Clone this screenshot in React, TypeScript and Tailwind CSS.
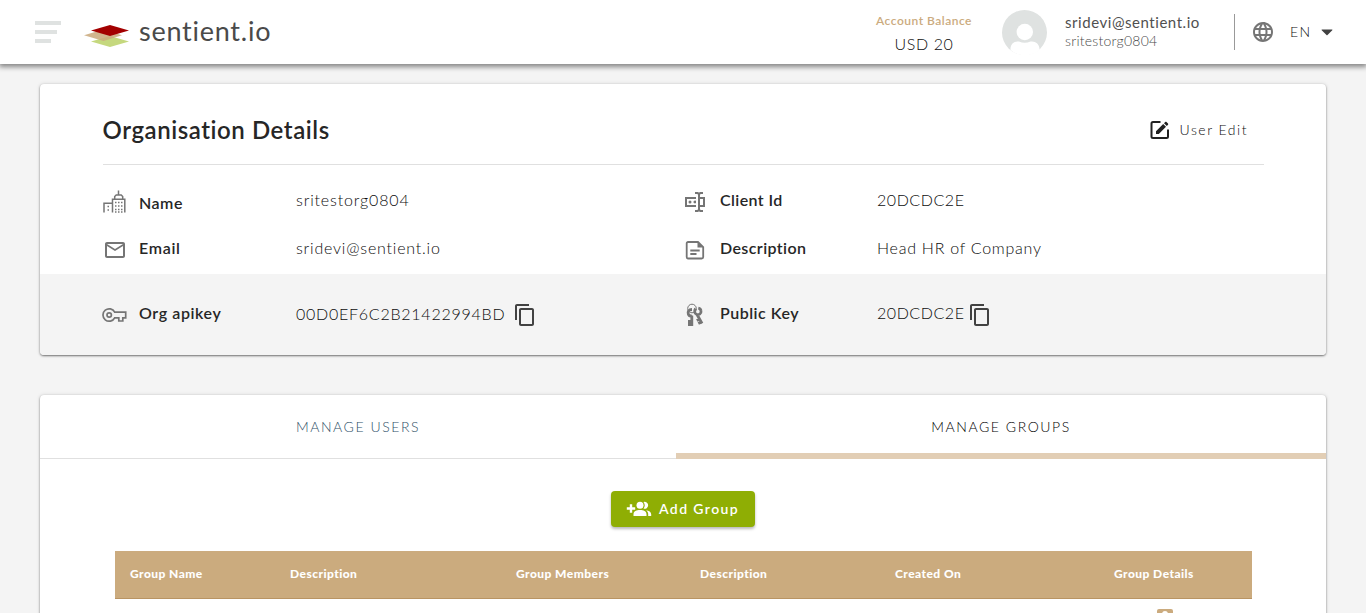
import type { ReactNode } from "react";
import { MdLanguage, MdOutlineMailOutline, MdContentCopy } from "react-icons/md";

function Logo() {
  return (
    <svg className="h-[24px] w-[46px]" viewBox="0 0 46 24">
      <path d="M7 17.5 26 12l19 5.500L26 23Z" fill="#c5d87e" />
      <path d="M0 11.300 19.500 5.500 38 11.300 19.500 17Z" fill="#cbab7e" fillOpacity="0.88" />
      <path d="M7 6.500 26 1l19 5.500L26 12Z" fill="#a30000" />
    </svg>
  );
}

function Avatar() {
  return (
    <svg className="size-[46px]" viewBox="0 0 46 46">
      <circle cx="22.500" cy="23.500" r="22.500" fill="#dfe2e1" />
      <circle cx="22.800" cy="23" r="8.200" fill="#fff" />
      <path d="M8.500 41v-1C8.500 35.500 11.500 32.500 15.500 32.500h1.500c4 1.800 7.500 1.800 11.500 0H30c4 0 7.500 3 7.500 7.500v1c-8 7-21 7-29 0Z" fill="#fff" />
    </svg>
  );
}

function CityIcon() {
  return (
    <svg className="h-[24px] w-[23px]" viewBox="0 0 23 24" fill="none" stroke="#757575" strokeWidth="1.500">
      <path d="M1 22.500V13.200h8M9.500 22.500V9.200h12.300V22.500M11.700 9V6.500l1.500-1.500h5l1.500 1.500V9M15.500 5V.5" />
      <path d="M4.500 16.500h1.500M4.500 20h1.500M12 12.500h1.500m1.500 0h1.500m1.500 0h1.500M12 16h1.500m1.500 0h1.500m1.500 0h1.500M12 19.500h1.500m1.500 0h1.500m1.500 0h1.500M12 22h1.500m1.500 0h1.500m1.500 0h1.500" />
    </svg>
  );
}

function TextboxIcon() {
  return (
    <svg className="-ml-px size-[24px]" viewBox="0 0 24 24" fill="#757575">
      <path d="M17,7H22V17H17V19A1,1 0 0,0 18,20H20V22H17.5C16.95,22 16,21.55 16,21C16,21.55 15.05,22 14.5,22H12V20H14A1,1 0 0,0 15,19V5A1,1 0 0,0 14,4H12V2H14.5C15.05,2 16,2.45 16,3C16,2.45 16.95,2 17.5,2H20V4H18A1,1 0 0,0 17,5V7M2,7H13V9H4V15H13V17H2V7M20,15V9H17V15H20M8.5,12A1.5,1.5 0 0,0 7,10.5A1.5,1.5 0 0,0 5.5,12A1.5,1.5 0 0,0 7,13.5A1.5,1.5 0 0,0 8.5,12M13,10.89C12.39,10.33 11.44,10.38 10.88,11C10.32,11.6 10.37,12.55 11,13.11C11.55,13.63 12.43,13.63 13,13.11V10.89Z" />
    </svg>
  );
}

function NoteIcon() {
  return (
    <svg className="-ml-px size-[24px]" viewBox="0 0 24 24" fill="none" stroke="#757575" strokeWidth="1.800">
      <path d="M5 4h10l5.200 5.200V19a1.500 1.500 0 0 1-1.500 1.500H5A1.500 1.500 0 0 1 3.700 19V5.300A1.300 1.300 0 0 1 5 4Z" />
      <path d="M14.500 4v5.500h5.500Z" fill="#757575" stroke="none" />
      <path d="M7.300 12.500h9.400M7.300 16h6.200" />
    </svg>
  );
}

function KeyIcon() {
  return (
    <svg className="-ml-px h-[16px] w-[25px]" viewBox="0 0 25 16" fill="none" stroke="#757575" strokeWidth="1.700">
      <path d="M12.700 5.200A6.200 6.200 0 1 0 12.700 10.800H16.800V14H20.800V10.800H23.700V5.200Z" />
      <circle cx="7.200" cy="8" r="2.200" />
    </svg>
  );
}

function KeysIcon() {
  return (
    <svg className="h-[24px] w-[22px]" viewBox="0 0 22 24" fill="none" stroke="#757575">
      <circle cx="8" cy="5.500" r="4.300" strokeWidth="1" />
      <path d="M8 6.500C4.500 6.500 3.500 9 4.300 11c.5 1.500 2.200 2.200 3.700 1.800M7.800 12.500V23M7.800 18.500H4M7.800 21.500H4" strokeWidth="2.800" />
      <path d="M11.500 5.500c-1 2-1.500 5 1.200 6 2.300.8 4.700-1 4.300-3.500-.2-1.500-1.300-2.500-2.700-2.800M13 11.500 18 20.500M15.500 16l-2.700 1.500M17 19l-2.700 1.500" strokeWidth="2.800" />
    </svg>
  );
}

function EditIcon() {
  return (
    <svg className="size-[20px]" viewBox="0 0 20 20" fill="none" stroke="#212121">
      <path d="M10.500 2H3a1.500 1.500 0 0 0-1.500 1.500v13A1.500 1.500 0 0 0 3 18h13.500a1.500 1.500 0 0 0 1.500-1.500V9.500" strokeWidth="2" />
      <path d="M6 11.200 13.200 4 16 6.800 8.800 14H6ZM14 3.200l1.200-1.200c.4-.4.900-.4 1.300 0l1.500 1.500c.4.400.4.900 0 1.300L16.800 6Z" fill="#212121" stroke="none" />
    </svg>
  );
}

function AddGroupIcon() {
  return (
    <svg className="h-[16px] w-[26px]" viewBox="0 0 26 16" fill="#fff">
      <path d="M3.800 3.300h2.400v3h3v2.400h-3v3H3.800v-3h-3V6.300h3Z" />
      <circle cx="14" cy="4.300" r="3.500" />
      <path d="M7.500 15v-1.800c0-3 3-4.200 6.500-4.200s6.500 1.200 6.500 4.200V15ZM17.500 1a3.500 3.500 0 1 1 0 6.600 5.500 5.500 0 0 0 0-6.600ZM20 9.200c3 .4 5.200 1.600 5.200 4V15h-3v-1.800c0-1.800-.8-3-2.200-4Z" />
    </svg>
  );
}

function Field({ icon, label, value, labelClass = "", valueClass = "" }: {
  icon: ReactNode; label: string; value: ReactNode; labelClass?: string; valueClass?: string;
}) {
  return (
    <div className="flex w-[581px] items-center">
      <span className="flex w-9 shrink-0 items-center">{icon}</span>
      <span className={`w-[157px] shrink-0 text-[16px] leading-6 font-semibold text-[#262626] ${labelClass}`}>{label}</span>
      <span className={`flex items-center text-[16px] leading-6 font-light whitespace-nowrap text-[#0c0c0c] ${valueClass}`}>{value}</span>
    </div>
  );
}

const columns = [
  { title: "Group Name", cell: "w-[160px]" },
  { title: "Description", cell: "w-[226px]" },
  { title: "Group Members", cell: "w-[184px]" },
  { title: "Description", cell: "w-[195px]" },
  { title: "Created On", cell: "w-[219px]" },
  { title: "Group Details", cell: "w-[120px]" },
];

export default function App() {
  return (
    <div className="flex h-[613px] flex-col overflow-hidden bg-[#f4f4f4] font-['Lato','Nunito',sans-serif] [font-variant-ligatures:none]">
      <header className="z-10 flex h-16 shrink-0 items-center bg-white pl-[35px] shadow-[0_2px_5px_1px_rgba(0,0,0,0.45)]">
        <div className="flex w-[49px] flex-col gap-[5px]">
          <span className="h-1 w-[26px] bg-[#dfe2e1]" />
          <span className="h-1 w-[22px] bg-[#dfe2e1]" />
          <span className="h-1 w-[16px] bg-[#dfe2e1]" />
        </div>
        <div className="mt-[7px]"><Logo /></div>
        <span className="-mt-[2px] ml-[9px] w-[737px] text-[27px] leading-8 tracking-[0.75px] text-[#4a4a4a]">sentient.io</span>
        <div className="flex w-[96px] flex-col items-center whitespace-nowrap">
          <span className="mt-[3px] text-[12px] leading-5 font-semibold tracking-[0.5px] text-[#cbab7e]">Account Balance</span>
          <span className="mt-px text-[16px] leading-6 font-light tracking-[0.6px] text-[#0c0c0c]">USD 20</span>
        </div>
        <div className="ml-[30px] w-[63px]"><Avatar /></div>
        <div className="-mt-[2px] flex w-[169px] flex-col whitespace-nowrap">
          <span className="text-[15px] leading-5 tracking-[0.55px] text-[#505050]">sridevi@sentient.io</span>
          <span className="text-[14px] leading-[18px] font-light tracking-[0.25px] text-[#4a4a4a]">sritestorg0804</span>
        </div>
        <div className="h-9 w-px bg-[#999]" />
        <MdLanguage className="ml-[16px] size-6 text-[#757575]" />
        <span className="-mt-px ml-[15px] w-[25px] text-[14px] font-light tracking-[1.4px] text-[#0c0c0c]">EN</span>
        <svg className="ml-[6px] h-[7px] w-3" viewBox="0 0 12 7"><path d="M1 .5h10q.8 0 .3.800L6.500 6q-.5.600-1 0L.7 1.300Q.2.500 1 .5Z" fill="#424242" /></svg>
      </header>

      <main className="flex flex-col px-10 pt-5">
        <section className="flex h-[271px] shrink-0 flex-col rounded-[4px] bg-white shadow-[0_1px_2px_rgba(0,0,0,0.5),0_0_4px_rgba(0,0,0,0.12)]">
          <div className="mr-[62px] ml-[63px] flex h-[81px] shrink-0 items-center justify-between border-b border-[#e0e0e0] pt-3 pr-[16px]">
            <h1 className="-ml-[0.5px] text-[24px] leading-8 font-semibold tracking-[0.57px] text-[#262626]">Organisation Details</h1>
            <div className="flex items-center gap-[10px]">
              <EditIcon />
              <span className="text-[14px] leading-5 font-light tracking-[1.5px] text-[#0c0c0c]">User Edit</span>
            </div>
          </div>
          <div className="flex h-[61px] shrink-0 items-center pt-[13px] pl-[63px]">
            <Field icon={<CityIcon />} label="Name" labelClass="pt-px tracking-[0.5px]" valueClass="-mt-[4px] tracking-[0.85px]" value="sritestorg0804" />
            <Field icon={<TextboxIcon />} label="Client Id" labelClass="-mt-[4px] tracking-[0.4px]" valueClass="-mt-[4px] tracking-[0.55px]" value="20DCDC2E" />
          </div>
          <div className="flex h-12 shrink-0 items-center pl-[63px]">
            <Field icon={<MdOutlineMailOutline className="size-6 text-[#757575]" />} label="Email" labelClass="-mt-[4px] tracking-[0.7px]" valueClass="-mt-[4px] tracking-[0.8px]" value="sridevi@sentient.io" />
            <Field icon={<NoteIcon />} label="Description" labelClass="-mt-[4px] tracking-[0.4px]" valueClass="-mt-[4px] tracking-[0.75px]" value="Head HR of Company" />
          </div>
          <div className="flex h-[81px] shrink-0 items-center rounded-b-[4px] bg-[#f4f4f4] pl-[63px]">
            <Field icon={<KeyIcon />} label="Org apikey" labelClass="-mt-[4px] tracking-[0.6px]" valueClass="tracking-[0.75px]" value={<><span className="-mt-[2px] w-[217px]">00D0EF6C2B21422994BD</span><MdContentCopy className="size-6 text-[#424242]" /></>} />
            <Field icon={<KeysIcon />} label="Public Key" labelClass="-mt-[4px] tracking-[0.5px]" valueClass="tracking-[0.55px]" value={<><span className="-mt-[4px] w-[91px]">20DCDC2E</span><MdContentCopy className="size-6 text-[#424242]" /></>} />
          </div>
        </section>

        <section className="mt-10 flex h-[300px] shrink-0 flex-col items-center rounded-[4px] bg-white shadow-[0_1px_2px_rgba(0,0,0,0.5),0_0_4px_rgba(0,0,0,0.12)]">
          <div className="flex h-16 w-full shrink-0 text-[14px] tracking-[1.550px]">
            <button className="w-[636px] border-b border-[#e0e0e0] font-light text-[#2f5068]">MANAGE USERS</button>
            <button className="w-[650px] border-b-[6px] border-[#e2ceb5] pt-[4px] font-light text-black">MANAGE GROUPS</button>
          </div>
          <button className="mt-8 flex h-9 w-[144px] shrink-0 items-center rounded-[4px] bg-[#8fae04] pl-[15px] text-[14px] font-semibold tracking-[1.4px] text-white shadow-[0_2px_3px_rgba(0,0,0,0.28)]">
            <AddGroupIcon />
            <span className="-mt-[2px] ml-[7px] whitespace-nowrap">Add Group</span>
          </button>
          <div className="mt-6 flex h-12 w-[1137px] shrink-0 items-center border-b border-[#b99463] bg-[#cbab7e] pb-[2px] pl-[15.500px] text-[12px] font-black tracking-[0.450px] text-white">
            {columns.map((column, index) => (
              <span key={index} className={column.cell}>{column.title}</span>
            ))}
          </div>
          <div className="flex h-12 w-[1137px] shrink-0 items-start justify-end pt-[10px] pr-[79px]">
            <span className="flex h-5 w-4 justify-center rounded-[2px] bg-[#cbab7e] pt-[2px]">
              <span className="size-[6px] rounded-full bg-white" />
            </span>
          </div>
        </section>
      </main>
    </div>
  );
}
